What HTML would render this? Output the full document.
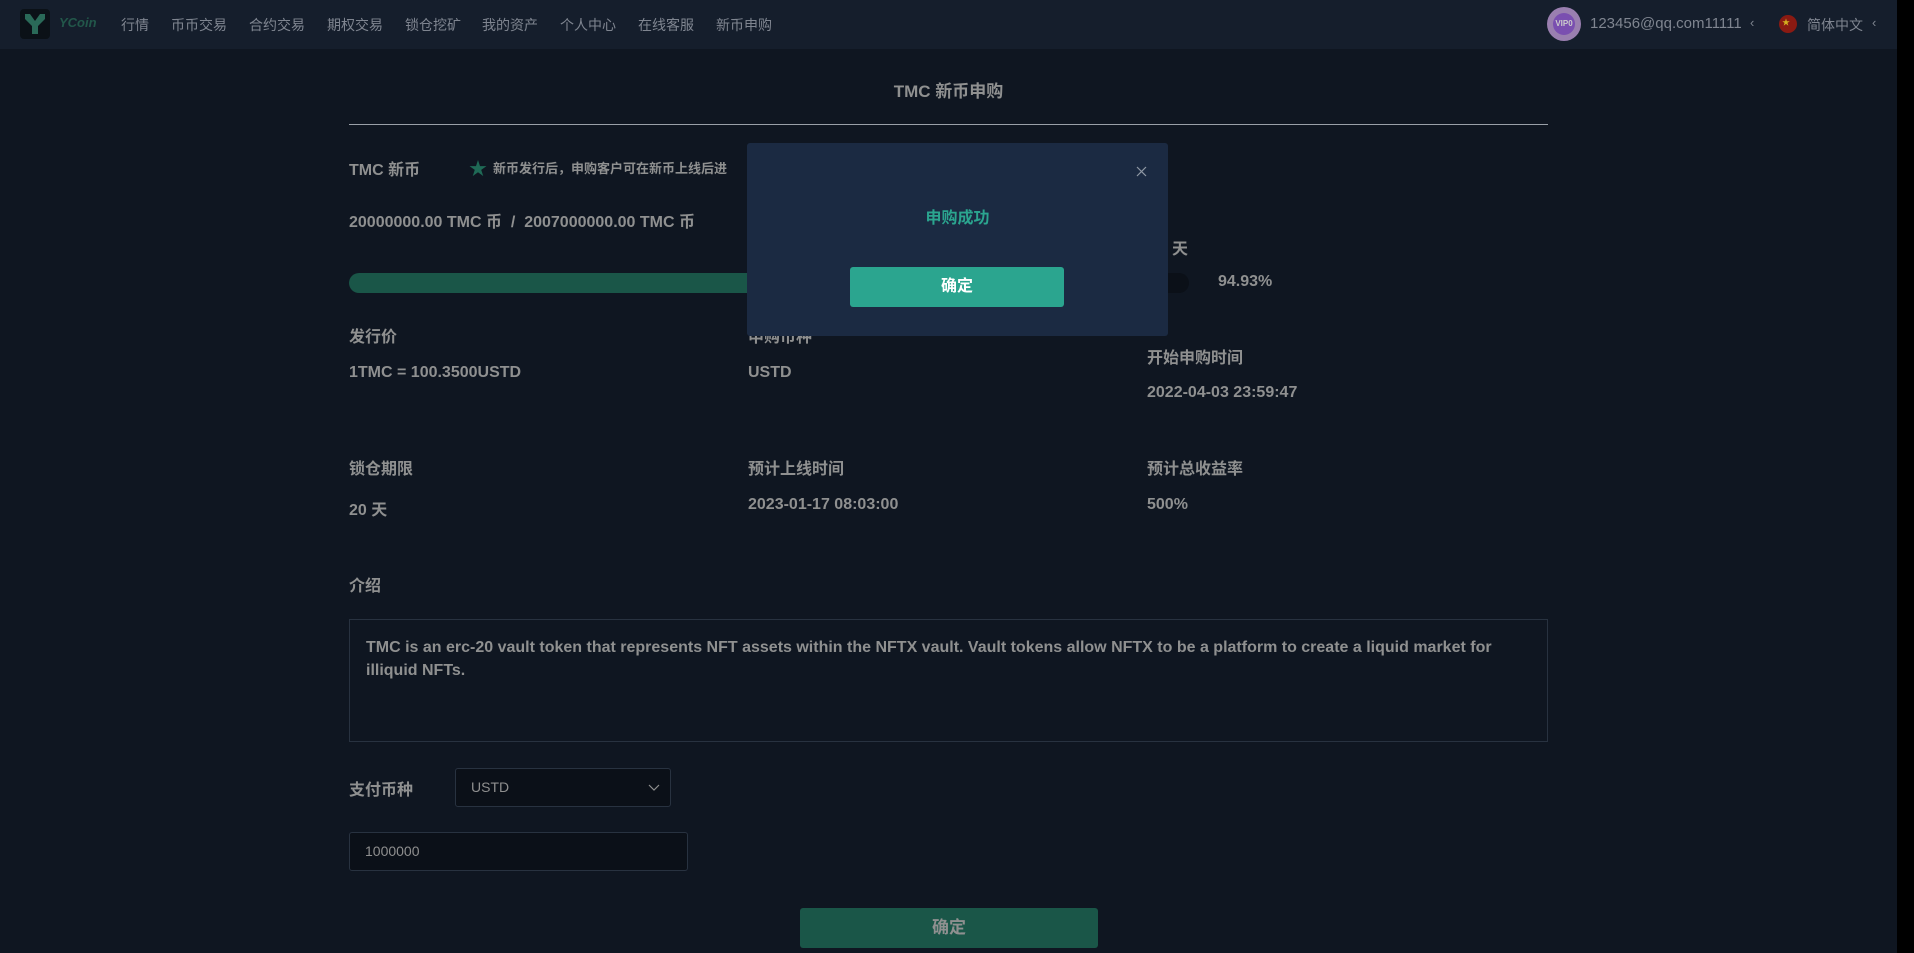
<!DOCTYPE html>
<html><head><meta charset="utf-8"><style>
*{margin:0;padding:0;box-sizing:border-box}
body{width:1914px;height:953px;overflow:hidden;background:#0f1621;font-family:"Liberation Sans","Noto Sans CJK SC",sans-serif;position:relative;color:#8f8f8f}
.a{position:absolute;white-space:nowrap}
.b{font-weight:bold;font-size:16px;color:#8f9090}
.nav{position:absolute;left:0;top:0;width:1914px;height:49px;background:#151e2c}
.nav .i{position:absolute;top:15px;font-size:14px;color:#7f8590}
</style></head><body>
<div class="nav">
 <div class="a" style="left:20px;top:9px;width:30px;height:30px;background:#0b1117;border-radius:4px"></div>
 <svg class="a" style="left:23px;top:12px" width="24" height="24" viewBox="0 0 24 24"><path d="M2 2h5l5 7 5-7h5v5l-7 7v8h-6v-8L2 7z" fill="#2a6a58"/></svg>
 <div class="a" style="left:59px;top:15px;font-size:13px;font-style:italic;font-weight:bold;color:#22574a">YCoin</div>
 <div class="i" style="left:121px">行情</div>
 <div class="i" style="left:171px">币币交易</div>
 <div class="i" style="left:249px">合约交易</div>
 <div class="i" style="left:327px">期权交易</div>
 <div class="i" style="left:405px">锁仓挖矿</div>
 <div class="i" style="left:482px">我的资产</div>
 <div class="i" style="left:560px">个人中心</div>
 <div class="i" style="left:638px">在线客服</div>
 <div class="i" style="left:716px">新币申购</div>
 <div class="a" style="left:1547px;top:7px;width:34px;height:34px;border-radius:50%;background:#9a7fb0"></div>
 <div class="a" style="left:1553px;top:13px;width:22px;height:22px;border-radius:50%;background:#7a4fb0;font-size:8px;color:#ccc;text-align:center;line-height:22px;font-weight:bold">VIP0</div>
 <div class="a" style="left:1590px;top:15px;font-size:15px;color:#7f8590">123456@qq.com11111</div>
 <div class="a" style="left:1750px;top:15px;font-size:13px;color:#7f8590">‹</div>
 <div class="a" style="left:1779px;top:15px;width:18px;height:18px;border-radius:50%;background:#8a1a12"></div>
 <div class="a" style="left:1782px;top:17px;font-size:8px;color:#d4b020">★</div>
 <div class="a" style="left:1807px;top:15px;font-size:14px;color:#7f8590">简体中文</div>
 <div class="a" style="left:1872px;top:15px;font-size:13px;color:#7f8590">‹</div>
</div>
<div class="a" style="left:1897px;top:0;width:17px;height:953px;background:#000"></div>

<div class="a b" style="left:0;width:1897px;text-align:center;top:77px;font-size:17px">TMC 新币申购</div>
<div class="a" style="left:349px;top:124px;width:1199px;height:1px;background:#9aa0a8"></div>

<div class="a b" style="left:349px;top:156px">TMC 新币</div>
<div class="a" style="left:469px;top:155px;font-size:18px;color:#1f6a56">★</div>
<div class="a b" style="left:493px;top:158px;font-size:13px">新币发行后，申购客户可在新币上线后进</div>
<div class="a b" style="left:349px;top:208px">20000000.00 TMC 币 &nbsp;/&nbsp; 2007000000.00 TMC 币</div>
<div class="a b" style="left:1172px;top:235px">天</div>
<div class="a" style="left:349px;top:273px;width:840px;height:20px;border-radius:10px;background:#0b1018"></div>
<div class="a" style="left:349px;top:273px;width:800px;height:20px;border-radius:10px;background:#1a5648"></div>
<div class="a b" style="left:1218px;top:273px">94.93%</div>

<div class="a b" style="left:349px;top:323px">发行价</div>
<div class="a b" style="left:349px;top:364px">1TMC = 100.3500USTD</div>
<div class="a b" style="left:748px;top:323px">申购币种</div>
<div class="a b" style="left:748px;top:364px">USTD</div>
<div class="a b" style="left:1147px;top:344px">开始申购时间</div>
<div class="a b" style="left:1147px;top:384px">2022-04-03 23:59:47</div>

<div class="a b" style="left:349px;top:455px">锁仓期限</div>
<div class="a b" style="left:349px;top:496px">20 天</div>
<div class="a b" style="left:748px;top:455px">预计上线时间</div>
<div class="a b" style="left:748px;top:496px">2023-01-17 08:03:00</div>
<div class="a b" style="left:1147px;top:455px">预计总收益率</div>
<div class="a b" style="left:1147px;top:496px">500%</div>

<div class="a b" style="left:349px;top:572px">介绍</div>
<div class="a" style="left:349px;top:619px;width:1199px;height:123px;border:1px solid #283240"></div>
<div class="a b" style="left:366px;top:636px;line-height:23px;white-space:normal;width:1170px">TMC is an erc-20 vault token that represents NFT assets within the NFTX vault. Vault tokens allow NFTX to be a platform to create a liquid market for illiquid NFTs.</div>

<div class="a b" style="left:349px;top:776px">支付币种</div>
<div class="a" style="left:455px;top:768px;width:216px;height:39px;border:1px solid #283240;border-radius:3px;background:#0b1018"></div>
<div class="a" style="left:471px;top:779px;font-size:14px;color:#8f8f8f">USTD</div>
<svg class="a" style="left:648px;top:784px" width="12" height="8" viewBox="0 0 12 8"><path d="M1 1l5 5 5-5" stroke="#8f8f8f" stroke-width="1.2" fill="none"/></svg>
<div class="a" style="left:349px;top:832px;width:339px;height:39px;border:1px solid #283240;border-radius:3px;background:#0b1018"></div>
<div class="a" style="left:365px;top:843px;font-size:14px;color:#8f8f8f">1000000</div>
<div class="a" style="left:800px;top:908px;width:298px;height:40px;border-radius:3px;background:#1a5648;color:#8f9090;font-weight:bold;font-size:17px;text-align:center;line-height:40px">确定</div>

<div class="a" style="left:747px;top:143px;width:421px;height:193px;background:#1b2a42;border-radius:3px"></div>
<svg class="a" style="left:1136px;top:166px" width="11" height="11" viewBox="0 0 11 11"><path d="M1 1l9 9M10 1l-9 9" stroke="#8f98a4" stroke-width="1.2"/></svg>
<div class="a" style="left:747px;width:421px;text-align:center;top:204px;font-size:16px;font-weight:bold;color:#2ba58f">申购成功</div>
<div class="a" style="left:850px;top:267px;width:214px;height:40px;border-radius:3px;background:#2ba58f;color:#fff;font-weight:bold;font-size:16px;text-align:center;line-height:40px">确定</div>
</body></html>
